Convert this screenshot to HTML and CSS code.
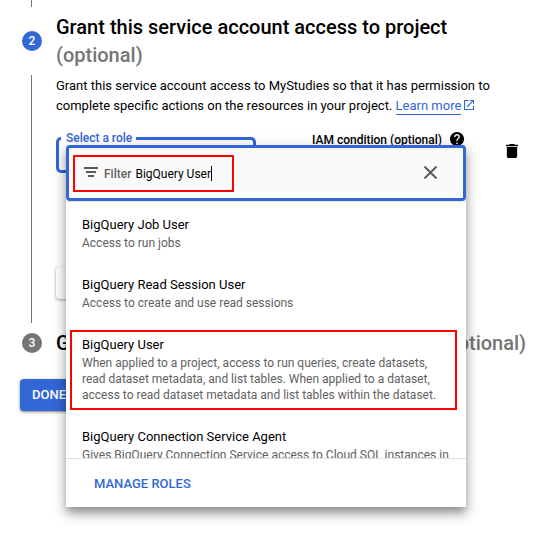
FILE: index.html
```html
<!DOCTYPE html>
<html lang="en">
<head>
<meta charset="utf-8">
<title>Create service account</title>
<link rel="stylesheet" href="styles.css">
</head>
<body>
<main class="page">
  <section class="step">
    <div class="rail">
      <span class="line line-top"></span>
      <span class="badge">2</span>
      <span class="line line-main"></span>
    </div>
    <div class="content">
      <h2 class="title">Grant this service account access to project<br><span class="optional">(optional)</span></h2>
      <p class="intro">Grant this service account access to MyStudies so that it has permission to<br>complete specific actions on the resources in your project. <a class="learn">Learn more</a><svg class="ext" viewBox="0 0 10 10" width="10" height="10"><path d="M4.500.5h-4v9h9v-4M6 .5h3.500V4M9.300.7 3 7" fill="none" stroke="currentColor" stroke-width="1.100"/></svg></p>
      <div class="role-row">
        <fieldset class="role"><legend>Select a role</legend></fieldset>
        <div class="condition"><span>IAM condition (optional)</span><svg viewBox="2 2 20 20" width="14" height="14"><path d="M12 2C6.480 2 2 6.480 2 12s4.480 10 10 10 10-4.480 10-10S17.520 2 12 2zm1 17h-2v-2h2v2zm2.070-7.750l-.9.920C13.450 12.900 13 13.500 13 15h-2v-.5c0-1.100.450-2.100 1.170-2.830l1.240-1.260c.370-.360.590-.860.590-1.410 0-1.100-.9-2-2-2s-2 .9-2 2H8c0-2.210 1.790-4 4-4s4 1.790 4 4c0 .880-.360 1.680-.930 2.250z"/></svg></div>
        <svg class="trash" viewBox="5 3 14 18" width="12" height="14" preserveAspectRatio="none"><path d="M6 19c0 1.100.9 2 2 2h8c1.100 0 2-.9 2-2V7H6v12zM19 4h-3.500l-1-1h-5l-1 1H5v2h14V4z"/></svg>
      </div>
      <div class="add-role"></div>
    </div>
  </section>
  <section class="step step-next">
    <div class="rail"><span class="badge badge-muted">3</span></div>
    <h2 class="title next-title">Grant users access to this service account <span class="optional">(optional)</span></h2>
  </section>
  <button class="done">DONE</button>
</main>
<div class="popup">
  <div class="filter">
    <div class="filter-mark">
      <svg class="filter-icon" viewBox="0 0 14 10" width="14" height="10"><path d="M0 0h14v2H0zM2 4h10v2H2zM4 8h6v2H4z" fill="#5a5a5a"/></svg>
      <span class="filter-label">Filter</span>
      <span class="filter-value">BigQuery User</span><span class="caret"></span>
    </div>
    <svg class="close" viewBox="0 0 12 12" width="13" height="13"><path d="M.5.5l11 11M11.500.5l-11 11" stroke="#5a5a5a" stroke-width="1.800"/></svg>
  </div>
  <ul class="options">
    <li class="option"><b>BigQuery Job User</b><p>Access to run jobs</p></li>
    <li class="option"><b>BigQuery Read Session User</b><p>Access to create and use read sessions</p></li>
    <li class="option marked"><b>BigQuery User</b><p>When applied to a project, access to run queries, create datasets,<br>read dataset metadata, and list tables. When applied to a dataset,<br>access to read dataset metadata and list tables within the dataset.</p></li>
    <li class="option last"><b>BigQuery Connection Service Agent</b><p>Gives BigQuery Connection Service access to Cloud SQL instances in</p></li>
  </ul>
  <div class="footer"><a class="manage">MANAGE ROLES</a></div>
</div>
</body>
</html>
```
FILE: styles.css
```css
* { box-sizing: border-box; }
body {
  margin: 0;
  height: 538px;
  overflow: hidden;
  background: #fff;
  color: #000;
  font: 13px/20px Roboto, "Liberation Sans", sans-serif;
  position: relative;
}
.page { height: 538px; }
h2, p, ul { margin: 0; padding: 0; }
.step { display: flex; height: 323px; }
.rail {
  width: 20px;
  margin: 0 14px 0 22px;
  display: flex;
  flex-direction: column;
  align-items: center;
  flex: none;
}
.line { width: 1px; background: #757575; margin-right: 1px; }
.line-top { height: 7px; margin-bottom: 24px; }
.line-main { height: 248px; margin-top: 24px; }
.badge {
  width: 20px;
  height: 20px;
  border-radius: 50%;
  background: #3367d6;
  color: #fff;
  font-size: 12px;
  font-weight: 500;
  line-height: 21px;
  text-align: center;
}
.badge-muted { background: #757575; }
.content { padding-top: 13px; flex: 1; }
.title { font-size: 20px; font-weight: 500; line-height: 28px; white-space: nowrap; }
.optional { color: #757575; }
.intro { margin-top: 7px; white-space: nowrap; }
.learn { color: #3367d6; border-bottom: 1px solid #3367d6; padding-bottom: 1px; }
.ext { color: #3367d6; margin-left: 3px; }
.role-row { display: flex; height: 40px; margin-top: 14px; }
.role {
  width: 200px;
  height: 43px;
  margin: 0;
  padding: 0 0 0 2px;
  border: 3px solid #3367d6;
  border-radius: 5px;
}
.role legend {
  padding: 0 4px 0 5px;
  color: #3367d6;
  font-size: 12px;
  font-weight: 500;
  line-height: 16px;
}
.condition {
  display: flex;
  gap: 8px;
  height: 16px;
  margin: 2px 0 0 56px;
  font-size: 12px;
  font-weight: 500;
  line-height: 16px;
  white-space: nowrap;
}
.trash { margin: 14px 0 0 42px; }
.add-role {
  width: 150px;
  height: 32px;
  margin-top: 97px;
  border-radius: 4px;
  box-shadow: 0 1px 3px rgba(0, 0, 0, .4);
}
.step-next { height: 56px; padding-top: 10px; }
.next-title { margin-top: -4px; }
.done {
  display: block;
  width: 74px;
  height: 32px;
  margin-left: 20px;
  padding: 0 0 0 12px;
  border: 0;
  border-radius: 4px;
  background: #3367d6;
  box-shadow: 0 1px 3px rgba(0, 0, 0, .5);
  color: #fff;
  font: 500 13px/32px Roboto, sans-serif;
  text-align: left;
}
.popup {
  position: absolute;
  left: 66px;
  top: 145px;
  width: 400px;
  height: 362px;
  background: #fff;
  border-radius: 4px 4px 0 0;
  box-shadow: 0 6px 7px -2px rgba(0, 0, 0, .24), 0 8px 12px 1px rgba(0, 0, 0, .16), 0 3px 14px 2px rgba(0, 0, 0, .14);
}
.filter {
  display: flex;
  height: 56px;
  padding: 7px 26px 0 4px;
  border: 3px solid #3367d6;
  border-radius: 4px;
  background: #fafafa;
  justify-content: space-between;
}
.filter-mark {
  display: flex;
  align-items: center;
  width: 161px;
  height: 37px;
  padding-left: 9px;
  border: 2px solid #f00;
  font-size: 12px;
}
.filter-icon { margin-bottom: 3px; }
.filter-label { margin-left: 6px; color: #616161; font-weight: 500; }
.filter-value { margin-left: 4px; }
.caret { width: 1px; height: 15px; background: #000; }
.close { margin: 11px 0 0; }
.options { height: 257px; overflow: hidden; list-style: none; border-top: 1px solid #e0e0e0; }
.option { height: 60px; padding: 13px 16px 0; }
.option b { display: block; font-weight: 400; line-height: 20px; }
.option p { font-size: 12px; line-height: 16px; color: #616161; white-space: nowrap; }
.marked { width: 387px; height: 80px; margin: 8px 0 0 4px; padding: 3px 10px 0; border: 2px solid #f00; }
.last { padding-top: 17px; }
.footer { height: 49px; padding: 15px 28px; border-top: 1px solid #e0e0e0; }
.manage { color: #3367d6; font-weight: 500; }
```
